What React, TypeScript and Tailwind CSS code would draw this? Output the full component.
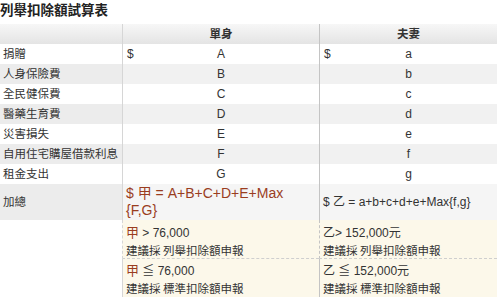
const rows = [
  { label: "捐贈", single: "A", couple: "a", dollar: true },
  { label: "人身保險費", single: "B", couple: "b" },
  { label: "全民健保費", single: "C", couple: "c" },
  { label: "醫藥生育費", single: "D", couple: "d" },
  { label: "災害損失", single: "E", couple: "e" },
  { label: "自用住宅購屋借款利息", single: "F", couple: "f" },
  { label: "租金支出", single: "G", couple: "g" },
];

const font = "font-['Liberation_Sans','Noto_Sans_CJK_TC',sans-serif]";
const cjk = "font-['Noto_Sans_CJK_TC',sans-serif]";

export default function App() {
  return (
    <div className={`w-[500px] h-[297px] overflow-hidden bg-white text-[#333] ${font}`}>
      <h1 className={`h-6 text-[13.5px] leading-[19px] font-bold text-[#222] ${cjk}`}>
        列舉扣除額試算表
      </h1>

      <div className="grid w-[497px] grid-cols-[122px_197px_178px]">
        {/* header */}
        <div className="h-5 bg-gradient-to-b from-[#f7f7f7] to-[#e4e4e4]" />
        <div className={`h-5 flex items-center justify-center border-l border-[#d6d6d6] bg-gradient-to-b from-[#f7f7f7] to-[#e4e4e4] text-[11.5px] font-bold ${cjk}`}>
          單身
        </div>
        <div className={`h-5 flex items-center justify-center border-l border-[#c4c4c4] bg-gradient-to-b from-[#f7f7f7] to-[#e4e4e4] text-[11.5px] font-bold ${cjk}`}>
          夫妻
        </div>

        {rows.map((r, i) => {
          const bg = i % 2 === 1 ? "bg-[#f1f1f1]" : "bg-white";
          return [
            <div
              key={r.label + "l"}
              className={`h-5 flex items-center pl-[3px] text-[11.5px] ${cjk} ${i % 2 === 1 ? "bg-[#ececec]" : "bg-white"}`}
            >
              {r.label}
            </div>,
            <div key={r.label + "s"} className={`relative h-5 flex items-center justify-center border-l border-[#d6d6d6] text-[12px] ${bg}`}>
              {r.dollar && <span className="absolute left-[4px]">$</span>}
              {r.single}
            </div>,
            <div key={r.label + "c"} className={`relative h-5 flex items-center justify-center border-l border-[#c4c4c4] text-[12px] ${bg}`}>
              {r.dollar && <span className="absolute left-[4px]">$</span>}
              {r.couple}
            </div>,
          ];
        })}

        {/* sum row */}
        <div className={`h-[36px] flex items-center pl-[3px] bg-[#ececec] text-[11.5px] ${cjk}`}>
          加總
        </div>
        <div className="h-[36px] border-l border-[#d6d6d6] bg-[#f5f5f5] pl-[3px] pt-[1px] text-[14px] leading-[17px] text-[#9a3d1f]">
          $ 甲 = A+B+C+D+E+Max
          <br />
          {"{F,G}"}
        </div>
        <div className="h-[36px] flex items-center border-l border-[#c4c4c4] bg-[#f5f5f5] pl-[3px] text-[12px]">
          $ 乙 = a+b+c+d+e+Max{"{f,g}"}
        </div>

        {/* suggestion rows */}
        <div className="h-[39px]" />
        <div className="h-[39px] border-l border-[#d6d6d6] border-b border-b-[#cfcfcf] border-dashed bg-[#fcf8ea] pl-[3px] pt-[3px] leading-[17px]">
          <div className="text-[12px]">
            <span className={`text-[13px] text-[#9a3d1f] ${cjk}`}>甲</span> &gt; 76,000
          </div>
          <div className={`text-[11.5px] ${cjk}`}>建議採 列舉扣除額申報</div>
        </div>
        <div className="h-[39px] border-l border-[#c4c4c4] border-b border-b-[#cfcfcf] border-dashed bg-[#fcf8ea] pl-[3px] pt-[3px] leading-[17px]">
          <div className="text-[12px]">
            <span className={cjk}>乙</span>&gt; 152,000<span className={cjk}>元</span>
          </div>
          <div className={`text-[11.5px] ${cjk}`}>建議採 列舉扣除額申報</div>
        </div>

        <div className="h-[39px]" />
        <div className="h-[39px] border-l border-[#d6d6d6] bg-[#fcf8ea] pl-[3px] pt-[2px] leading-[17px]">
          <div className="text-[12px]">
            <span className={`text-[13px] text-[#9a3d1f] ${cjk}`}>甲</span> ≦ 76,000
          </div>
          <div className={`text-[11.5px] ${cjk}`}>建議採 標準扣除額申報</div>
        </div>
        <div className="h-[39px] border-l border-[#c4c4c4] bg-[#fcf8ea] pl-[3px] pt-[2px] leading-[17px]">
          <div className="text-[12px]">
            <span className={cjk}>乙</span> ≦ 152,000<span className={cjk}>元</span>
          </div>
          <div className={`text-[11.5px] ${cjk}`}>建議採 標準扣除額申報</div>
        </div>
      </div>
    </div>
  );
}
